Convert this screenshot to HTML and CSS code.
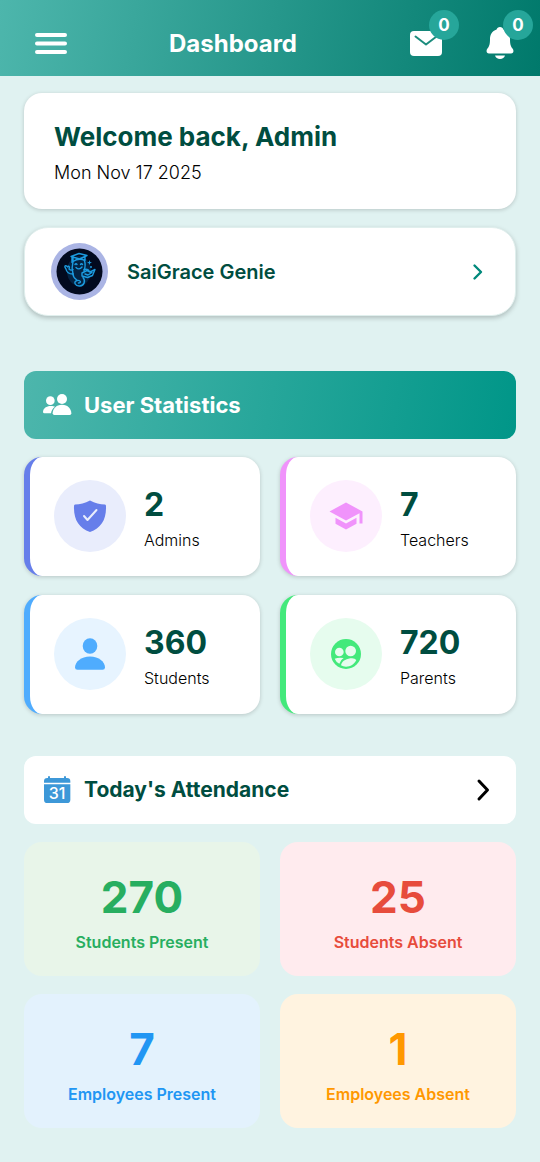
FILE: index.html
```
<!DOCTYPE html>
<html lang="en">
<head>
  <meta charset="UTF-8">
  <meta name="viewport" content="width=device-width, initial-scale=1.0">
  <title>Dashboard</title>
  <link rel="stylesheet" href="styles.css">
</head>
<body>
  <header class="topbar">
    <button class="menu-button" aria-label="Menu">
      <svg width="36" height="36" viewBox="0 0 36 36">
        <path d="M4 9H32M4 17.500H32M4 26H32" stroke="#fff" stroke-width="4" stroke-linecap="round"/>
      </svg>
    </button>
    <h1>Dashboard</h1>
    <div class="actions">
      <button class="action" aria-label="Messages">
        <svg width="36" height="36" viewBox="0 0 36 36">
          <rect x="2" y="5" width="32" height="25" rx="4" fill="#fff"/>
          <path d="M7.500 10.500L18 18.500L28.500 10.500" fill="none" stroke="#1b8c7d" stroke-width="2" stroke-linecap="round" stroke-linejoin="round"/>
        </svg>
        <span class="badge">0</span>
      </button>
      <button class="action" aria-label="Notifications">
        <svg width="36" height="36" viewBox="0 0 36 36">
          <path d="M18 1C16.200 1 15 2 14.600 3.400C10 4.800 8 8.800 8 13C8 19 7 20.500 5.300 22.800C4 24.500 4.300 27.500 7 27.500H29C31.700 27.500 32 24.500 30.700 22.800C29 20.500 28 19 28 13C28 8.800 26 4.800 21.400 3.400C21 2 19.800 1 18 1Z" fill="#fff"/>
          <path d="M13 29.500H23C22.400 31.700 20.500 33 18 33C15.500 33 13.600 31.700 13 29.500Z" fill="#fff"/>
        </svg>
        <span class="badge">0</span>
      </button>
    </div>
  </header>

  <main>
    <section class="card welcome">
      <h2>Welcome back, Admin</h2>
      <p>Mon Nov 17 2025</p>
    </section>

    <a href="#" class="card genie">
      <svg class="avatar" viewBox="0 0 57 57">
        <circle cx="28.500" cy="28.500" r="28.500" fill="#aab4e4"/>
        <circle cx="28.500" cy="28.500" r="23" fill="#020a1f"/>
        <ellipse cx="28" cy="28" rx="12" ry="15" fill="#06345c" opacity=".6"/>
        <g fill="none" stroke="#1c9be0" stroke-width="1.400" stroke-linecap="round" stroke-linejoin="round">
          <!-- cap -->
          <path d="M20 13.500L28 10.500L36 12.500L28.500 16ZM22 15V18.500Q28 14.500 34 17.500V14M21 14V19.500"/>
          <!-- face -->
          <path d="M22 18.500C20.500 24 21 27 22 31M33.500 18C35 22 34 25 33 28M24 21.500Q25 20 26 21.500M29.500 21.500Q30.500 20 31.500 21.500M25 24.500Q28 27.500 31 24"/>
          <!-- arms -->
          <path d="M22 31C18 31 15.500 29 15 26C12.500 22.500 15 21.500 16.500 24C18 22 19 24.500 18 26Q20 28 22 26.500M33 26.500Q37 25.500 38 28"/>
          <!-- book -->
          <path d="M31 30L36 27.500L39 29L44 26.500L41.500 32.500L36.500 34.500L31 33ZM34 31L37 32L41 29.500"/>
          <!-- body and tail -->
          <path d="M22 31C22 35 25 36 26.500 37.500M32 34.500C35 38 33 42.500 29 43C24 43.500 22 38.500 26 37.500C30 37 30.500 40 27.500 40"/>
        </g>
        <path d="M38.500 17L39.200 19L41 19.500L39.200 20.200L38.500 22L37.800 20.200L36 19.500L37.800 19Z" fill="#1c9be0"/>
        <circle cx="40" cy="24" r="1" fill="#1c9be0"/>
      </svg>
      <span class="genie-name">SaiGrace Genie</span>
      <svg class="chevron" width="24" height="24" viewBox="0 0 24 24">
        <path d="M9.500 5.500L16 12L9.500 18.500" fill="none" stroke="#00897b" stroke-width="2.400" stroke-linecap="round" stroke-linejoin="round"/>
      </svg>
    </a>

    <section class="block">
      <div class="section-header stats-header">
        <svg width="30" height="30" viewBox="0 0 90 90" fill="#fff">
          <circle cx="60" cy="27" r="15"/>
          <circle cx="25" cy="32" r="13"/>
          <path d="M60 44C78 44 88 57 88 70Q88 75 83 75H37Q32 75 32 70C32 57 42 44 60 44Z"/>
          <path d="M26 48C32 48 37 49 39 50C32 55 28 62 27 70H7Q3 70 3 65C4 55 13 48 26 48Z"/>
        </svg>
        <h3>User Statistics</h3>
      </div>

      <div class="grid stats-grid">
        <div class="card stat admins">
          <div class="stat-icon">
            <svg width="36" height="36" viewBox="0 0 36 36">
              <path d="M18 2.500C23 5.500 28 6.300 33 6.500Q34 6.600 34 8C34.500 22 29 30 18 34C7 30 1.500 22 2 8Q2 6.600 3 6.500C8 6.300 13 5.500 18 2.500Z" fill="#667eea"/>
              <path d="M12 18L15.500 22L24.500 12" fill="none" stroke="#e9edfc" stroke-width="2" stroke-linecap="round" stroke-linejoin="round"/>
            </svg>
          </div>
          <div class="stat-text">
            <div class="stat-number">2</div>
            <div class="stat-label">Admins</div>
          </div>
        </div>
        <div class="card stat teachers">
          <div class="stat-icon">
            <svg width="36" height="36" viewBox="0 0 24 24" fill="#f093fb">
              <path d="M5 13.180v4L12 21l7-3.820v-4L12 17l-7-3.820zM12 3L1 9l11 6 9-4.910V17h2V9L12 3z"/>
            </svg>
          </div>
          <div class="stat-text">
            <div class="stat-number">7</div>
            <div class="stat-label">Teachers</div>
          </div>
        </div>
        <div class="card stat students">
          <div class="stat-icon">
            <svg width="36" height="36" viewBox="0 0 36 36" fill="#4facfe">
              <ellipse cx="18" cy="10" rx="7.300" ry="7.700"/>
              <path d="M18 20.500C27 20.500 33 26 33 31.500Q33 33.800 30.500 33.800H5.500Q3 33.800 3 31.500C3 26 9 20.500 18 20.500Z"/>
            </svg>
          </div>
          <div class="stat-text">
            <div class="stat-number">360</div>
            <div class="stat-label">Students</div>
          </div>
        </div>
        <div class="card stat parents">
          <div class="stat-icon">
            <svg width="36" height="36" viewBox="-54 -54 108 108">
              <circle r="45" fill="#43e97b"/>
              <g fill="#e6fcee">
                <circle cx="14" cy="-9" r="16"/>
                <circle cx="-20" cy="-6" r="13"/>
                <path d="M-34 14Q-22 9 -7 12Q-17 18 -20 29Q-30 24 -34 14Z"/>
                <path d="M-15 34C-12 19 4 13 18 13Q27 13 31 18C25 31 13 38 0 38Q-9 38 -15 34Z"/>
              </g>
            </svg>
          </div>
          <div class="stat-text">
            <div class="stat-number">720</div>
            <div class="stat-label">Parents</div>
          </div>
        </div>
      </div>
    </section>

    <section class="block">
      <a href="#" class="section-header attendance-header">
        <svg width="30" height="30" viewBox="0 0 90 90">
          <path d="M18 9V6Q18 3 21 3T24 6V9H66V6Q66 3 69 3T72 6V9H75Q85 9 85 19V23H6V19Q6 9 16 9Z" fill="#3d98d8"/>
          <path d="M6 28H85V74Q85 84 75 84H16Q6 84 6 74Z" fill="#3d98d8"/>
          <text class="calendar-day" x="45" y="73" text-anchor="middle">31</text>
        </svg>
        <h3>Today's Attendance</h3>
        <svg class="chevron" width="30" height="30" viewBox="0 0 30 30">
          <path d="M11 6L19.500 15L11 24" fill="none" stroke="#000" stroke-width="3" stroke-linecap="round" stroke-linejoin="round"/>
        </svg>
      </a>

      <div class="grid">
        <div class="attendance students-present">
          <div class="attendance-number">270</div>
          <div class="attendance-label">Students Present</div>
        </div>
        <div class="attendance students-absent">
          <div class="attendance-number">25</div>
          <div class="attendance-label">Students Absent</div>
        </div>
        <div class="attendance employees-present">
          <div class="attendance-number">7</div>
          <div class="attendance-label">Employees Present</div>
        </div>
        <div class="attendance employees-absent">
          <div class="attendance-number">1</div>
          <div class="attendance-label">Employees Absent</div>
        </div>
      </div>
    </section>
  </main>
</body>
</html>
```
FILE: styles.css
```
* {
  margin: 0;
  padding: 0;
  box-sizing: border-box;
}
body {
  background-color: #e0f2f1;
  font-family: Inter, "Liberation Sans", sans-serif;
  color: #111;
}
a {
  color: inherit;
  text-decoration: none;
}
button {
  background: none;
  border: none;
  cursor: pointer;
  font-family: inherit;
}
svg {
  display: block;
  flex-shrink: 0;
}

/* top bar */
.topbar {
  display: flex;
  align-items: center;
  padding: 26px 11px 14px 33px;
  background: linear-gradient(100deg, #4db6ac, #00796b);
}
.topbar h1 {
  flex: 1;
  text-align: center;
  color: #fff;
  font-size: 24px;
  line-height: 36px;
  font-weight: 700;
}
.actions {
  display: flex;
  gap: 16px;
}
.action {
  position: relative;
  width: 58px;
  padding: 0 11px;
}
.badge {
  position: absolute;
  top: -16px;
  right: -4px;
  width: 30px;
  height: 30px;
  border-radius: 50%;
  background-color: #26a69a;
  color: #fff;
  font-size: 17px;
  line-height: 30px;
  font-weight: 700;
  text-align: center;
}

main {
  padding: 17px 24px 34px;
}
.card {
  background-color: #fff;
  border-radius: 18px;
  box-shadow: 0 1px 4px rgba(0, 0, 0, 0.18);
}
.welcome {
  padding: 26px 30px 24px;
  margin-bottom: 18px;
}
.welcome h2 {
  color: #004d40;
  font-size: 26px;
  line-height: 36px;
  font-weight: 700;
}
.welcome p {
  font-size: 18px;
  line-height: 24px;
  font-weight: 300;
  color: #000;
  margin-top: 6px;
}
.genie {
  display: flex;
  align-items: center;
  padding: 15px 26px;
  border-radius: 24px;
  border: 1px solid #e0efed;
  box-shadow: 0 2px 5px rgba(0, 0, 0, 0.22);
}
.avatar {
  width: 57px;
  height: 57px;
}
.genie-name {
  flex: 1;
  margin-left: 19px;
  color: #004d40;
  font-size: 20px;
  line-height: 28px;
  font-weight: 600;
}

/* sections */
.block {
  margin-top: 42px;
}
.genie + .block {
  margin-top: 55px;
}
.section-header {
  display: flex;
  align-items: center;
  gap: 12px;
  padding: 18px;
  margin-bottom: 18px;
  border-radius: 12px;
}
.section-header h3 {
  flex: 1;
  font-size: 22px;
  line-height: 32px;
  font-weight: 700;
}
.stats-header {
  background: linear-gradient(100deg, #4db6ac, #26a69a 50%, #009688);
  color: #fff;
}
.attendance-header {
  background-color: #fff;
  color: #004d40;
}
.section-header.attendance-header h3 {
  font-size: 21px;
}
.calendar-day {
  fill: #fff;
  font-size: 48px;
  font-weight: 500;
}
.grid {
  display: grid;
  grid-template-columns: 1fr 1fr;
  gap: 18px 20px;
}
.stats-grid {
  row-gap: 19px;
}

/* user statistics */
.stat {
  display: flex;
  align-items: center;
  gap: 18px;
  padding: 23px 24px 24px;
  border-left: 6px solid;
}
.stat-icon {
  display: flex;
  align-items: center;
  justify-content: center;
  width: 72px;
  height: 72px;
  border-radius: 50%;
}
.stat-text {
  padding-top: 2px;
}
.stat-number {
  color: #004d40;
  font-size: 32px;
  line-height: 46px;
  font-weight: 700;
}
.stat-label {
  color: #000;
  font-size: 16px;
  line-height: 24px;
  font-weight: 300;
}
.admins {
  border-color: #667eea;
}
.admins .stat-icon {
  background-color: #e9edfc;
}
.teachers {
  border-color: #f093fb;
}
.teachers .stat-icon {
  background-color: #fdeffe;
}
.students {
  border-color: #4facfe;
}
.students .stat-icon {
  background-color: #e7f4ff;
}
.parents {
  border-color: #43e97b;
}
.parents .stat-icon {
  background-color: #e6fcee;
}

/* attendance */
.attendance {
  padding: 28px 12px 22px;
  border-radius: 18px;
  text-align: center;
}
.attendance-number {
  font-size: 44px;
  line-height: 54px;
  font-weight: 700;
}
.attendance-label {
  margin-top: 6px;
  font-size: 16px;
  line-height: 24px;
  font-weight: 600;
}
.students-present {
  background-color: #e8f5e9;
  color: #27ae60;
}
.students-absent {
  background-color: #ffebee;
  color: #e74c3c;
}
.employees-present {
  background-color: #e3f2fd;
  color: #2196f3;
}
.employees-absent {
  background-color: #fff3e0;
  color: #ff9800;
}
```
